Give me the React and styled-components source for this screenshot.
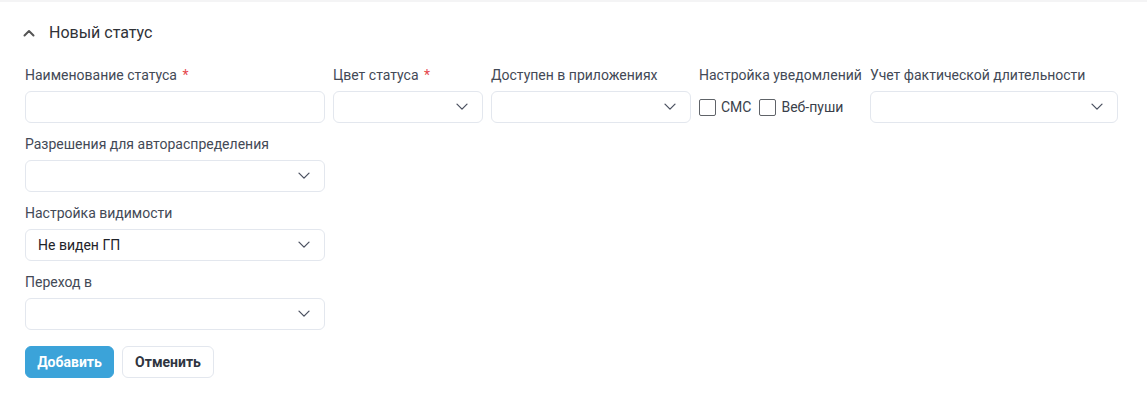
import React from "react";
import styled, { createGlobalStyle } from "styled-components";

const GlobalStyle = createGlobalStyle`
  body {
    margin: 0;
    background: #f4f4f5;
    font-family: Roboto, "Liberation Sans", Arial, sans-serif;
  }
`;

function Chevron({ size = 12 }) {
  return (
    <svg width={size} height={size * 0.6} viewBox="0 0 12 7" fill="none">
      <path d="M1 1l5 5 5-5" stroke="#4b5160" strokeWidth="1.3" strokeLinecap="round" strokeLinejoin="round" />
    </svg>
  );
}

export default function App() {
  return (
    <>
      <GlobalStyle />
      <Card>
        <Header>
          <CollapseIcon viewBox="0 0 12 8" fill="none">
            <path d="M1.5 6.5L6 2l4.5 4.5" stroke="#555" strokeWidth="2" strokeLinecap="round" strokeLinejoin="round" />
          </CollapseIcon>
          <Title>Новый статус</Title>
        </Header>

        <Row>
          <Field $w={300}>
            <Label>
              Наименование статуса <Req>*</Req>
            </Label>
            <Input />
          </Field>
          <Field $w={150}>
            <Label>
              Цвет статуса <Req>*</Req>
            </Label>
            <Select>
              <Chevron />
            </Select>
          </Field>
          <Field $w={200}>
            <Label>Доступен в приложениях</Label>
            <Select>
              <Chevron />
            </Select>
          </Field>
          <Field $w={163}>
            <Label>Настройка уведомлений</Label>
            <Checks>
              <Check>
                <Box />
                СМС
              </Check>
              <Check>
                <Box />
                Веб-пуши
              </Check>
            </Checks>
          </Field>
          <Field $w={248}>
            <Label>Учет фактической длительности</Label>
            <Select>
              <Chevron />
            </Select>
          </Field>
        </Row>

        <Field $w={300}>
          <Label>Разрешения для автораспределения</Label>
          <Select>
            <Chevron />
          </Select>
        </Field>
        <Field $w={300}>
          <Label>Настройка видимости</Label>
          <Select>
            <Value>Не виден ГП</Value>
            <Chevron />
          </Select>
        </Field>
        <Field $w={300}>
          <Label>Переход в</Label>
          <Select>
            <Chevron />
          </Select>
        </Field>

        <Actions>
          <Button $primary>Добавить</Button>
          <Button>Отменить</Button>
        </Actions>
      </Card>
    </>
  );
}

const Card = styled.div`
  margin-top: 2px;
  background: #fff;
  min-height: 400px;
  box-sizing: border-box;
  padding: 0 25px;
`;

const Header = styled.div`
  display: flex;
  align-items: center;
  height: 63px;
  padding-bottom: 2px;
  box-sizing: border-box;
`;

const CollapseIcon = styled.svg`
  width: 12px;
  height: 8px;
  margin-left: -2px;
  margin-right: 14px;
`;

const Title = styled.div`
  font-size: 16px;
  color: #2f3237;
`;

const Row = styled.div`
  display: flex;
  gap: 8px;
`;

const Field = styled.div`
  width: ${(p) => p.$w}px;
  flex-shrink: 0;
  display: flex;
  flex-direction: column;
  margin-bottom: 11px;
`;

const Label = styled.div`
  font-size: 14px;
  line-height: 20px;
  height: 20px;
  color: #434956;
  margin-bottom: 6px;
  white-space: nowrap;
`;

const Req = styled.span`
  color: #e5484d;
  margin-left: 2px;
`;

const Input = styled.div`
  height: 32px;
  box-sizing: border-box;
  border: 1px solid #e3e7ee;
  border-radius: 6px;
`;

const Select = styled(Input)`
  display: flex;
  align-items: center;
  justify-content: flex-end;
  padding: 0 14px 0 12px;
`;

const Value = styled.span`
  flex: 1;
  font-size: 14px;
  color: #1f2329;
`;

const Checks = styled.div`
  display: flex;
  align-items: center;
  gap: 8px;
  height: 32px;
`;

const Check = styled.label`
  display: flex;
  align-items: center;
  gap: 5px;
  font-size: 14px;
  color: #3a3f4a;
`;

const Box = styled.span`
  width: 17px;
  height: 17px;
  box-sizing: border-box;
  border: 1.5px solid #5f6368;
  border-radius: 2px;
`;

const Actions = styled.div`
  display: flex;
  gap: 8px;
  padding-top: 5px;
`;

const Button = styled.button`
  height: 32px;
  width: ${(p) => (p.$primary ? "89px" : "92px")};
  padding: 0;
  border-radius: 6px;
  font-family: Roboto, "Liberation Sans", Arial, sans-serif;
  font-size: 14px;
  font-weight: 700;
  border: 1px solid ${(p) => (p.$primary ? "#3ba3d9" : "#e3e7ee")};
  background: ${(p) => (p.$primary ? "#3ba3d9" : "#fff")};
  color: ${(p) => (p.$primary ? "#fff" : "#2f3540")};
`;
